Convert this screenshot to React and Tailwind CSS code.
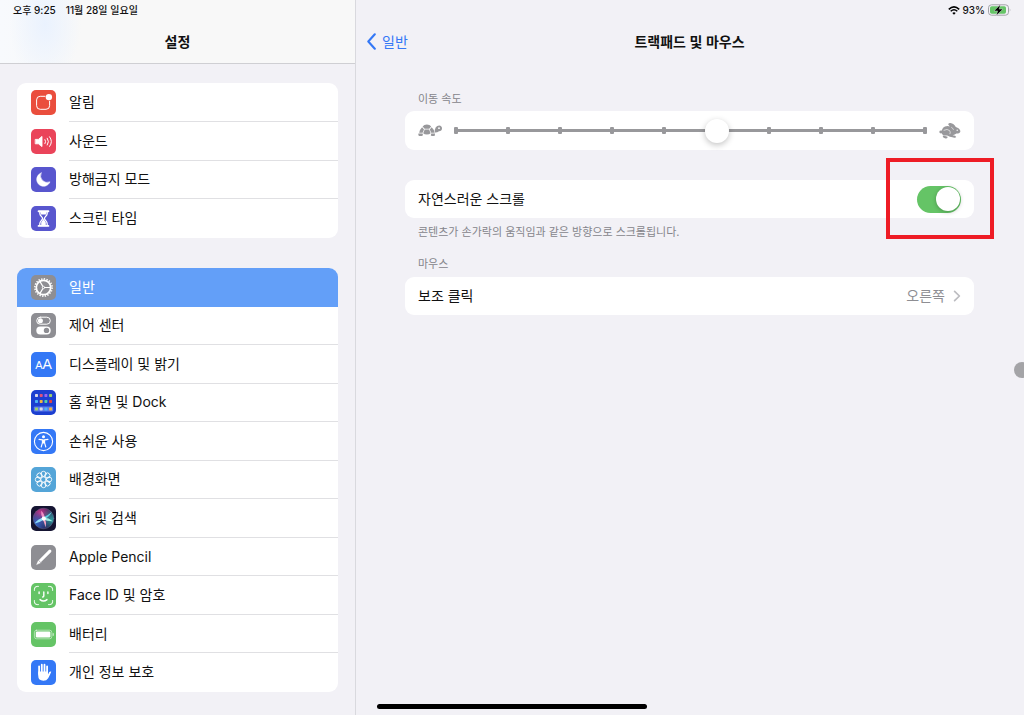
import React, { useState } from "react";

const PALETTE = {
  w: "#d9d9e8", r: "#e0527a", p: "#9a63f0", g: "#9ccf6b",
  b: "#4db4f5", y: "#f0b341", t: "#55d0a8", d: "#e04343",
};

function Glyph({ children }) {
  return (
    <svg viewBox="0 0 25 25" className="size-full" fill="none" stroke="#fff" strokeLinecap="round" strokeLinejoin="round" aria-hidden="true">
      {children}
    </svg>
  );
}

const BellGlyph = () => (
  <Glyph>
    <path d="M14 6.3H9.2Q5.6 6.3 5.6 9.9V15.7Q5.6 19.3 9.2 19.3H15Q18.6 19.3 18.6 15.7V11.2" strokeWidth="1" />
    <circle cx="17.9" cy="7.1" r="3.2" fill="#fff" stroke="none" />
  </Glyph>
);

const SoundGlyph = () => (
  <Glyph>
    <path d="M4.6 10.4H7.4L11 7.4V17.6L7.4 14.8H4.6Z" fill="#fff" strokeWidth="0.9" />
    <path d="M14 10.6Q15.3 12.6 14 14.6M16.3 9.2Q18.7 12.6 16.3 16M18.6 7.8Q22.3 12.6 18.6 17.4" strokeWidth="1" />
  </Glyph>
);

const MoonGlyph = () => (
  <Glyph>
    <path d="M10.2 5.9A6.9 6.9 0 1 0 19 14.8A6.7 6.7 0 0 1 10.2 5.9Z" fill="#fff" strokeWidth="0.5" />
  </Glyph>
);

const HourglassGlyph = () => (
  <Glyph>
    <path d="M7.6 5.2H17.4M7.6 19.9H17.4" strokeWidth="1.9" />
    <path d="M8.8 5.5V7.4C8.8 10 11.6 11 11.6 12.5S8.8 15.1 8.8 17.7V19.6H16.2V17.7C16.2 15.1 13.4 14 13.4 12.5S16.2 10 16.2 7.4V5.5" strokeWidth="1.3" />
    <path d="M9.4 6H15.6L15 8.4H10ZM12.5 12.8L14.8 16.4V19H10.2V16.4Z" fill="#fff" stroke="none" />
  </Glyph>
);

const GearGlyph = () => (
  <Glyph>
    <circle cx="12.5" cy="12.5" r="8.6" strokeWidth="1.6" strokeDasharray="1.4 1.3" strokeLinecap="butt" />
    <circle cx="12.5" cy="12.5" r="7.2" strokeWidth="1.7" />
    <path d="M12.5 12.5H19M12.5 12.5L9 6.6M12.5 12.5L9 18.4" strokeWidth="1.2" />
    <circle cx="12.5" cy="12.5" r="1.2" fill="#8e8e93" strokeWidth="0.9" />
  </Glyph>
);

const ControlGlyph = () => (
  <Glyph>
    <rect x="5.7" y="4.2" width="13.6" height="7" rx="3.5" strokeWidth="1" />
    <circle cx="9.4" cy="7.7" r="2.5" fill="#fff" stroke="none" />
    <rect x="5.3" y="13.4" width="14.4" height="8" rx="4" fill="#fff" stroke="none" />
    <circle cx="15.5" cy="17.4" r="2.7" fill="#8e8e93" stroke="none" />
  </Glyph>
);

const DisplayGlyph = () => (
  <span className="flex size-full items-baseline justify-center font-['Liberation_Sans',sans-serif] leading-[25px] text-white" aria-hidden="true">
    <span className="text-[11px] leading-[25px]">A</span>
    <span className="text-sm leading-[25px]">A</span>
  </span>
);

const HomeGlyph = () => (
  <Glyph>
    <rect x="2.8" y="16.4" width="19.4" height="5" rx="1.2" fill="#5d7bea" stroke="none" />
    {["wrpg", "bytd", "gwby"].map((row, r) =>
      row.split("").map((c, i) => (
        <rect key={`${r}-${i}`} x={4 + i * 4.7} y={[4, 10, 17.4][r]} width="3" height="3" rx="0.7" fill={PALETTE[c]} stroke="none" />
      ))
    )}
  </Glyph>
);

const AccessGlyph = () => (
  <Glyph>
    <circle cx="12.5" cy="12.5" r="9.1" strokeWidth="1.1" />
    <circle cx="12.5" cy="7.7" r="1.5" fill="#fff" stroke="none" />
    <path d="M8 10.4L11.4 10.9V13.8L10.2 18M17 10.4L13.6 10.9V13.8L14.8 18" strokeWidth="1.1" />
    <path d="M11.2 10.5H13.8V14.4H11.2Z" fill="#fff" stroke="none" />
  </Glyph>
);

const FlowerGlyph = () => (
  <Glyph>
    <circle cx="12.5" cy="12.5" r="2.7" strokeWidth="0.9" />
    {[0, 45, 90, 135, 180, 225, 270, 315].map((a) => (
      <circle key={a} cx="12.5" cy="6.9" r="2.6" strokeWidth="0.9" transform={`rotate(${a} 12.5 12.5)`} />
    ))}
  </Glyph>
);

const SiriGlyph = () => (
  <Glyph>
    <defs>
      <radialGradient id="siri-pink" cx="0.35" cy="0.22" r="0.6">
        <stop offset="0" stopColor="#c03a8e" />
        <stop offset="1" stopColor="#c03a8e" stopOpacity="0" />
      </radialGradient>
      <radialGradient id="siri-teal" cx="0.9" cy="0.55" r="0.55">
        <stop offset="0" stopColor="#2c9a9c" />
        <stop offset="1" stopColor="#2c9a9c" stopOpacity="0" />
      </radialGradient>
      <radialGradient id="siri-blue" cx="0.15" cy="0.75" r="0.6">
        <stop offset="0" stopColor="#3568c8" />
        <stop offset="1" stopColor="#3568c8" stopOpacity="0" />
      </radialGradient>
    </defs>
    <circle cx="12.5" cy="12.5" r="10.3" fill="#2a1c4e" stroke="none" />
    <circle cx="12.5" cy="12.5" r="10.3" fill="url(#siri-pink)" stroke="none" />
    <circle cx="12.5" cy="12.5" r="10.3" fill="url(#siri-teal)" stroke="none" />
    <circle cx="12.5" cy="12.5" r="10.3" fill="url(#siri-blue)" stroke="#8a8fb0" strokeWidth="0.5" strokeOpacity="0.6" />
    <path d="M13.2 11.6Q7 12.6 3.6 17.4Q9.5 16 13.2 13.4Z" fill="#8fdcf8" stroke="none" />
    <path d="M12 11.6Q17 9.2 20.8 5.9Q18.4 11 13 13.4Z" fill="#5fcfe0" stroke="none" />
    <path d="M11.8 12.6Q9.6 8.5 10.2 4.8Q13.8 8.4 13.8 12.6Z" fill="#ef8fc6" stroke="none" />
    <path d="M11.6 12.4Q13.4 17 14.6 21.4Q15.8 17 14 12.4Z" fill="#f5a3c2" stroke="none" />
    <path d="M12.5 11.6Q18 12 21.8 15.2Q16 15.4 12.5 13.4Z" fill="#9debe2" stroke="none" />
    <circle cx="12.8" cy="12.6" r="2.1" fill="#fff" stroke="none" />
  </Glyph>
);

const PencilGlyph = () => (
  <Glyph>
    <path d="M18.9 6.1L9 16" strokeWidth="3" />
    <path d="M7.5 15.3L5.6 19.6L9.8 17.7Z" fill="#fff" strokeWidth="0.4" />
    <path d="M7.3 15.1L10 17.8" stroke="#8e8e93" strokeWidth="0.6" />
  </Glyph>
);

const FaceGlyph = () => (
  <Glyph>
    <path d="M3.4 7.4V6.2Q3.4 3.4 6.2 3.4H7.4M17.6 3.4H18.8Q21.6 3.4 21.6 6.2V7.4M21.6 17.6V18.8Q21.6 21.6 18.8 21.6H17.6M7.4 21.6H6.2Q3.4 21.6 3.4 18.8V17.6" strokeWidth="1" />
    <path d="M8.1 8.9V10.5M16.9 8.9V10.5M12.8 8.9V13Q12.8 14 11.6 14M9 16.6Q12.5 19.6 16 16.6" strokeWidth="1.4" />
  </Glyph>
);

const BatteryGlyph = () => (
  <Glyph>
    <rect x="3.4" y="8.2" width="17.4" height="8.6" rx="2.2" strokeWidth="0.6" strokeOpacity="0.8" />
    <rect x="4.8" y="9.6" width="14.6" height="5.8" rx="1.2" fill="#fff" stroke="none" />
    <path d="M22.2 11.6V13.4" strokeWidth="0.8" />
  </Glyph>
);

const HandGlyph = () => (
  <Glyph>
    <path d="M8.1 6.3V14M10.8 4.7V13M13.5 4.7V13M16.1 6.3V14" strokeWidth="1.8" />
    <path d="M7.2 11.6H17V14.4L18.3 12Q19.3 10.9 20.3 11.8Q18.6 15.8 17.2 18.2Q15.6 20.8 12.4 20.8Q7.2 20.8 7.2 15.6Z" fill="#fff" stroke="none" />
  </Glyph>
);

const GROUPS = [
  {
    height: "h-[155px]",
    items: [
      { label: "알림", bg: "bg-[#ea4e3d]", icon: BellGlyph },
      { label: "사운드", bg: "bg-[#ea445a]", icon: SoundGlyph },
      { label: "방해금지 모드", bg: "bg-[#5856ce]", icon: MoonGlyph },
      { label: "스크린 타임", bg: "bg-[#5856ce]", icon: HourglassGlyph },
    ],
  },
  {
    height: "h-[424px]",
    items: [
      { label: "일반", bg: "bg-[#8e8e93]", icon: GearGlyph, active: true },
      { label: "제어 센터", bg: "bg-[#8e8e93]", icon: ControlGlyph },
      { label: "디스플레이 및 밝기", bg: "bg-[#3478f6]", icon: DisplayGlyph },
      { label: "홈 화면 및 Dock", bg: "bg-[#1c3fd0]", icon: HomeGlyph },
      { label: "손쉬운 사용", bg: "bg-[#3478f6]", icon: AccessGlyph },
      { label: "배경화면", bg: "bg-[#54a5d8]", icon: FlowerGlyph },
      { label: "Siri 및 검색", bg: "bg-[#151432]", icon: SiriGlyph },
      { label: "Apple Pencil", bg: "bg-[#8e8e93]", icon: PencilGlyph },
      { label: "Face ID 및 암호", bg: "bg-[#65c466]", icon: FaceGlyph },
      { label: "배터리", bg: "bg-[#65c466]", icon: BatteryGlyph },
      { label: "개인 정보 보호", bg: "bg-[#3478f6]", icon: HandGlyph },
    ],
  },
];

function SidebarItem({ item, last }) {
  const Icon = item.icon;
  return (
    <li className={item.active ? "bg-[#639ff8] text-white" : "text-[#111]"}>
      <a href="#" aria-current={item.active ? "page" : undefined} className="flex h-full items-center gap-[13px] pl-3.5">
        <span className={`size-[25px] shrink-0 overflow-hidden rounded-[5px] ${item.bg}`}>
          <Icon />
        </span>
        <span className={`flex h-full grow items-center border-b text-sm ${last || item.active ? "border-transparent" : "border-[#e0e0e3]"}`}>
          {item.label}
        </span>
      </a>
    </li>
  );
}

const Turtle = () => (
  <svg viewBox="0 0 24 13" className="h-[13px] w-6 shrink-0" fill="#98989b" aria-hidden="true">
    <path d="M4.6 2.6Q6 0.4 8.9 0.4T13.2 2.6L11.2 4.8H6.6Z" />
    <path d="M4.1 3.3L6 5.4L4.6 8.8H1.2Q1.8 5.4 4.1 3.3ZM13.7 3.3L11.8 5.4L13.2 8.8H16.6Q16 5.4 13.7 3.3Z" />
    <path d="M6.7 5.5H11.1L12.6 9.2Q11.4 10.6 8.9 10.6T5.2 9.2Z" />
    <path d="M0.4 9.5H4.6L5 11.2Q3.4 12.4 1 12Q0 11 0.4 9.5ZM13.2 9.5H17L16.8 11.8Q14.4 12.6 12.8 11.4Z" />
    <path fillRule="evenodd" d="M16.8 8.6Q16.4 5.4 17.8 3.2Q19 1.4 21.2 1.4Q24 1.8 24 4.4Q23.8 7 21 7.2Q19.2 8.8 16.8 8.6ZM21 3.3A0.9 0.9 0 1 0 21 5.1A0.9 0.9 0 1 0 21 3.3Z" />
  </svg>
);

const Rabbit = () => (
  <svg viewBox="0 0 22 16" className="h-4 w-[22px] shrink-0" fill="#98989b" aria-hidden="true">
    <ellipse cx="2" cy="9" rx="1.7" ry="1.4" />
    <path d="M2.6 9.6Q2.6 3.4 8.6 3Q11.2 3 13.4 4.8Q10 3.2 9.2 1.4Q9.4 0 11.4 0.1Q15 0.6 16.8 4Q20.6 5.2 21.4 8Q21.2 10.6 17.4 10.6Q16 12 13.6 12.2Q16.8 12.4 17.2 14Q16.6 15.2 14.4 14.6Q10.6 14 8.2 12.4H4.6Q2.8 11.6 2.6 9.6Z" />
    <path d="M3.8 12.8Q5.4 12.6 8.6 13.8Q9 15.6 6.6 15.4Q3.6 14.8 3.8 12.8Z" />
    <path d="M5 7.2Q8.4 5.4 10.6 7.6Q11.8 9 11 10.8M12.6 4.4Q14 5.2 14.4 6.4" fill="none" stroke="#fff" strokeWidth="0.6" strokeLinecap="round" />
    <circle cx="18.2" cy="7.2" r="0.7" fill="#fff" />
  </svg>
);

export default function App() {
  const [speed, setSpeed] = useState(5);
  const [natural, setNatural] = useState(true);

  return (
    <div className="relative flex min-h-screen overflow-hidden bg-[#f2f1f6] font-[Inter,'Noto_Sans_CJK_KR',sans-serif] text-[#111]">
      <aside className="w-[356px] shrink-0 border-r border-[#d9d9de]">
        <header className="h-16 border-b border-[#cfcfd3] bg-[#f8f8f8] bg-[radial-gradient(ellipse_36px_60px_at_45px_24px,#eaf2fe,transparent),linear-gradient(90deg,#f8fafd,#f8f8f8_80px)]">
          <div className="flex h-5 items-center gap-2.5 pl-[13px] text-[10px] font-medium">
            <span>오후 9:25</span>
            <span>11월 28일 일요일</span>
          </div>
          <h1 className="text-center text-sm leading-[43px] font-semibold">설정</h1>
        </header>
        <nav aria-label="설정" className="flex flex-col gap-[30px] px-[17px] pt-[19px]">
          {GROUPS.map((group, g) => (
            <ul key={g} className={`grid auto-rows-fr overflow-hidden rounded-[9px] bg-white ${group.height}`}>
              {group.items.map((item, i) => (
                <SidebarItem key={item.label} item={item} last={i === group.items.length - 1} />
              ))}
            </ul>
          ))}
        </nav>
      </aside>

      <main className="min-w-0 grow">
        <div className="flex h-5 items-center justify-end gap-[3px] pr-[13px] text-[10px] font-medium">
          <svg viewBox="0 0 12 9" className="h-[9px] w-3" fill="none" stroke="#000" aria-label="Wi-Fi">
            <path d="M0.8 3.3Q6 -1.5 11.2 3.3" strokeWidth="1.6" />
            <path d="M2.7 5.3Q6 2.3 9.3 5.3" strokeWidth="1.5" />
            <path d="M6 8.8L4.3 7Q6 5.6 7.7 7Z" fill="#000" stroke="none" />
          </svg>
          <span>93%</span>
          <svg viewBox="0 0 23 12" className="h-3 w-[23px]" aria-label="충전 중">
            <rect x="0.5" y="0.8" width="20" height="10.4" rx="3" fill="none" stroke="#a3a3a8" />
            <rect x="2" y="2.3" width="16" height="7.4" rx="1.7" fill="#65c466" />
            <path d="M21.8 4.3Q23 6 21.8 7.7Z" fill="#a3a3a8" />
            <path d="M12.4 0.6L6 6.9H9.6L8.4 11.6L15 5.1H11.2Z" fill="#000" stroke="#f2f1f6" strokeWidth="0.4" />
          </svg>
        </div>

        <header className="grid h-[43px] grid-cols-[1fr_auto_1fr] items-center pr-3 pl-[11px]">
          <a href="#" className="flex items-center gap-1.5 text-sm text-[#3478f6]">
            <svg viewBox="0 0 9 17" className="h-[17px] w-[9px]" fill="none" stroke="currentColor" strokeWidth="2.1" strokeLinecap="round" strokeLinejoin="round" aria-hidden="true">
              <path d="M7.8 1.3L1.3 8.5L7.8 15.7" />
            </svg>
            일반
          </a>
          <h2 className="text-sm font-semibold">트랙패드 및 마우스</h2>
        </header>

        <div className="pt-7 pr-[50px] pl-[49px]">
          <label htmlFor="speed" className="block pl-[13px] text-[11px] leading-4 text-[#85858b]">이동 속도</label>
          <div className="mt-1 flex h-[39px] items-center rounded-[9px] bg-white px-[13px]">
            <Turtle />
            <div className="relative mr-0.5 grow">
              <div className="mr-2.5 ml-3 flex items-center justify-between bg-[linear-gradient(#98989b,#98989b)] bg-[length:100%_3px] bg-center bg-no-repeat">
                {Array.from({ length: 10 }, (_, i) => (
                  <span key={i} className="h-[7px] w-1 rounded-[1px] bg-[#98989b]" />
                ))}
              </div>
              <input
                id="speed"
                type="range"
                min="0"
                max="9"
                value={speed}
                onChange={(e) => setSpeed(Number(e.target.value))}
                className="absolute inset-x-0.5 inset-y-0 my-auto h-6 w-[calc(100%-2px)] appearance-none bg-transparent outline-none [&::-webkit-slider-thumb]:size-6 [&::-webkit-slider-thumb]:appearance-none [&::-webkit-slider-thumb]:rounded-full [&::-webkit-slider-thumb]:bg-white [&::-webkit-slider-thumb]:shadow-[0_2px_6px_rgba(0,0,0,0.24)]"
              />
            </div>
            <Rabbit />
          </div>

          <div className="relative mt-[30px] flex h-[38px] items-center justify-between rounded-[9px] bg-white px-[13px]">
            <label htmlFor="natural" className="text-sm">자연스러운 스크롤</label>
            <input
              id="natural"
              type="checkbox"
              role="switch"
              checked={natural}
              onChange={(e) => setNatural(e.target.checked)}
              className="flex h-[27px] w-11 appearance-none items-center rounded-full bg-[#e3e3e6] px-px before:size-6 before:rounded-full before:bg-white before:shadow-[0_1px_4px_rgba(0,0,0,0.25)] checked:justify-end checked:bg-[#65c466]"
            />
            <div className="pointer-events-none absolute -top-[22px] -right-5 h-[81px] w-[108px] border-4 border-[#ee1c25]" />
          </div>
          <p className="mt-1.5 pl-[13px] text-[11px] leading-4 text-[#85858b]">콘텐츠가 손가락의 움직임과 같은 방향으로 스크롤됩니다.</p>

          <h3 className="mt-4 pl-[13px] text-[11px] leading-4 text-[#85858b]">마우스</h3>
          <a href="#" className="mt-[5px] flex h-[38px] items-center rounded-[9px] bg-white px-[13px] text-sm">
            <span className="grow">보조 클릭</span>
            <span className="mr-2 text-[#8e8e93]">오른쪽</span>
            <svg viewBox="0 0 8 12" className="h-3 w-2" fill="none" stroke="#bcbcc0" strokeWidth="1.7" strokeLinecap="round" strokeLinejoin="round" aria-hidden="true">
              <path d="M1.6 1.3L6.4 6L1.6 10.7" />
            </svg>
          </a>
        </div>
      </main>

      <div className="absolute top-[362px] -right-1.5 size-4 rounded-full bg-[#a4a4a7]" />
      <div className="absolute bottom-1.5 left-1/2 h-[5px] w-[270px] -translate-x-1/2 rounded-full bg-black" />
    </div>
  );
}
